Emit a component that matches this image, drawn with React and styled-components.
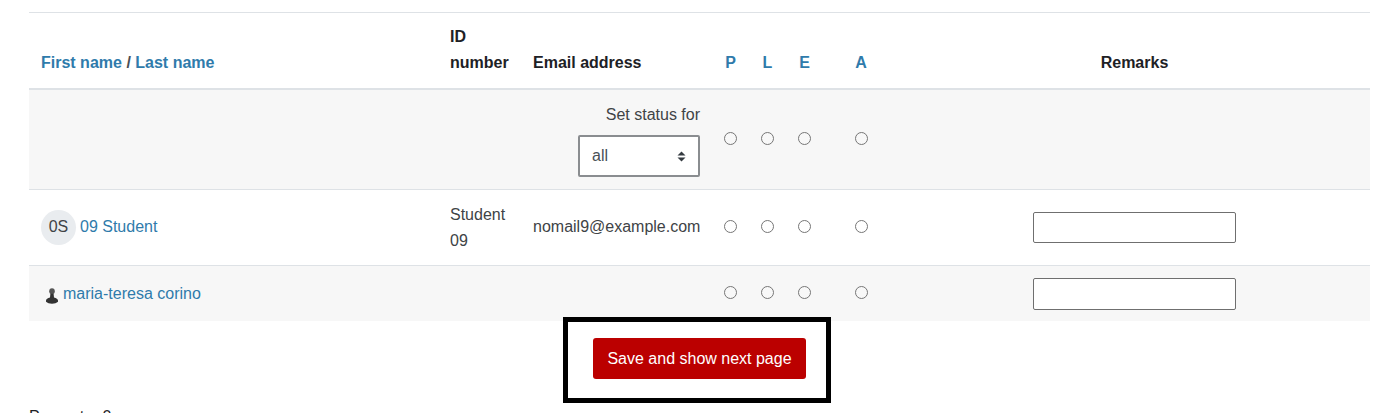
import React from 'react';
import styled, { createGlobalStyle } from 'styled-components';

const GlobalStyle = createGlobalStyle`
  html, body {
    margin: 0;
    padding: 0;
    height: 413px;
    overflow: hidden;
    background: #fff;
  }
  body {
    font-family: 'Liberation Sans', Arial, sans-serif;
    font-size: 16px;
    line-height: 26px;
    color: #404346;
  }
`;

const Page = styled.div`
  padding: 12px 9px 0 29px;
`;

const Table = styled.table`
  width: 1341px;
  table-layout: fixed;
  border-collapse: collapse;
  border-top: 1px solid #dee2e6;
`;

const HeadCell = styled.th`
  padding: 11px 12px 12px;
  font-weight: 700;
  vertical-align: bottom;
  text-align: ${(p) => p.$align || 'left'};
  color: #1d2125;
  border-bottom: 2px solid #dee2e6;
`;

const Separator = styled.span`
  color: #4a4f54;
`;

const StatusHead = styled(HeadCell)`
  padding: 11px 0 12px;
  text-align: center;
`;

const Link = styled.a`
  color: #2f7bab;
  text-decoration: none;
`;

const Row = styled.tr`
  background: ${(p) => (p.$shaded ? '#f7f7f7' : '#fff')};
  border-top: 1px solid #dee2e6;
`;

const Cell = styled.td`
  padding: ${(p) => p.$pad || '11px 12px 12px'};
  vertical-align: middle;
  text-align: ${(p) => p.$align || 'left'};
`;

const StatusCell = styled.td`
  padding: 0 0 2px;
  text-align: center;
`;

const Radio = styled.span`
  display: block;
  width: 13px;
  height: 13px;
  margin: 0 auto;
  box-sizing: border-box;
  border: 1px solid #767676;
  border-radius: 50%;
  background: ${(p) => (p.$shaded ? '#f8f8f8' : '#fff')};
`;

const SelectBox = styled.div`
  display: flex;
  align-items: center;
  justify-content: space-between;
  box-sizing: border-box;
  width: 122px;
  height: 42px;
  margin: 7px 0 0 auto;
  padding: 0 12px;
  background: #fff;
  border: 2px solid #8a8d90;
  border-radius: 2px;
  color: #495057;
  text-align: left;
`;

const UserCell = styled.div`
  display: flex;
  align-items: center;
  gap: 4px;
  padding-left: ${(p) => p.$indent || 0}px;
`;

const Initials = styled.span`
  display: flex;
  align-items: center;
  justify-content: center;
  width: 35px;
  height: 35px;
  border-radius: 50%;
  background: #e9ecef;
  color: #404346;
`;

const PicIcon = styled.svg`
  margin-top: 4px;
  flex: none;
`;

const Remarks = styled.span`
  display: block;
  box-sizing: border-box;
  width: 203px;
  height: ${(p) => p.$h || 31}px;
  margin: 0 auto;
  background: #fff;
  border: 1px solid #6f6f6f;
  border-radius: 2px;
`;

const Actions = styled.div`
  position: relative;
  display: flex;
  justify-content: center;
  align-items: flex-start;
  box-sizing: border-box;
  width: 1341px;
  height: 83px;
  padding: 17px 0 0;
`;

const SaveButton = styled.button`
  width: 213px;
  height: 41px;
  padding: 0;
  border: 0;
  border-radius: 3px;
  background: #bb0000;
  color: #fff;
  font: inherit;
`;

// the black box drawn over the screenshot around the button
const Highlight = styled.div`
  position: absolute;
  left: 534px;
  top: -4px;
  width: 268px;
  height: 86px;
  box-sizing: border-box;
  border: 5px solid #000;
`;

const Summary = styled.p`
  margin: 0;
  color: #1d2125;
`;

const Sort = () => (
  <svg width="9" height="11" viewBox="0 0 9 11" aria-hidden="true">
    <path d="M4.500 0.500L8.500 4.500H0.500zM4.500 10.500L0.500 6.500H8.500z" fill="#343a40" />
  </svg>
);

const UserPic = () => (
  <PicIcon width="14" height="16" viewBox="0 0 14 16" aria-hidden="true">
    <ellipse cx="7" cy="3.200" rx="2.800" ry="3" fill="#555" />
    <path d="M5.400 5.800h3.200l.4 3.800c2.400.5 3.900 1.500 4 3v1.200c-1.400 1.300-3.400 1.900-6 1.900s-4.600-.6-6-1.900v-1.200c.1-1.500 1.600-2.500 4-3z" fill="#333" />
  </PicIcon>
);

const Radios = ({ shaded }) => (
  <>
    <StatusCell><Radio $shaded={shaded} /></StatusCell>
    <StatusCell><Radio $shaded={shaded} /></StatusCell>
    <StatusCell><Radio $shaded={shaded} /></StatusCell>
    <StatusCell><Radio $shaded={shaded} /></StatusCell>
  </>
);

export default function App() {
  return (
    <Page>
      <GlobalStyle />
      <Table>
        <colgroup>
          <col style={{ width: 409 }} />
          <col style={{ width: 83 }} />
          <col style={{ width: 191 }} />
          <col style={{ width: 37 }} />
          <col style={{ width: 37 }} />
          <col style={{ width: 37 }} />
          <col style={{ width: 76 }} />
          <col />
        </colgroup>
        <thead>
          <tr>
            <HeadCell>
              <Link href="#">First name</Link> <Separator>/</Separator> <Link href="#">Last name</Link>
            </HeadCell>
            <HeadCell>ID number</HeadCell>
            <HeadCell>Email address</HeadCell>
            <StatusHead><Link href="#">P</Link></StatusHead>
            <StatusHead><Link href="#">L</Link></StatusHead>
            <StatusHead><Link href="#">E</Link></StatusHead>
            <StatusHead><Link href="#">A</Link></StatusHead>
            <HeadCell $align="center">Remarks</HeadCell>
          </tr>
        </thead>
        <tbody>
          <Row $shaded>
            <Cell />
            <Cell />
            <Cell $align="right" $pad="12px">
              Set status for
              <SelectBox>
                all
                <Sort />
              </SelectBox>
            </Cell>
            <Radios shaded />
            <Cell />
          </Row>
          <Row>
            <Cell>
              <UserCell>
                <Initials>0S</Initials>
                <Link href="#">09 Student</Link>
              </UserCell>
            </Cell>
            <Cell $pad="12px 12px 11px">Student 09</Cell>
            <Cell $pad="11px 0 12px 12px">nomail9@example.com</Cell>
            <Radios />
            <Cell><Remarks /></Cell>
          </Row>
          <Row $shaded>
            <Cell $pad="12px 12px 11px">
              <UserCell $indent={4}>
                <UserPic />
                <Link href="#">maria-teresa corino</Link>
              </UserCell>
            </Cell>
            <Cell />
            <Cell />
            <Radios shaded />
            <Cell $pad="12px 12px 11px"><Remarks $h={32} /></Cell>
          </Row>
        </tbody>
      </Table>
      <Actions>
        <SaveButton>Save and show next page</SaveButton>
        <Highlight />
      </Actions>
      <Summary>Present = 0</Summary>
    </Page>
  );
}
